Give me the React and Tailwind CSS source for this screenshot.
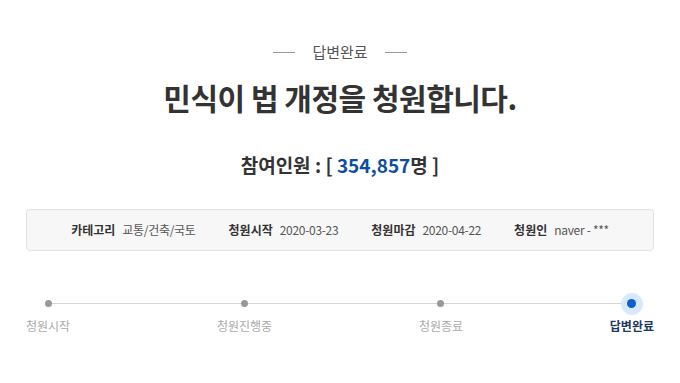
const steps = [
  { label: "청원시작", active: false },
  { label: "청원진행중", active: false },
  { label: "청원종료", active: false },
  { label: "답변완료", active: true },
];

const info = [
  ["카테고리", "교통/건축/국토"],
  ["청원시작", "2020-03-23"],
  ["청원마감", "2020-04-22"],
  ["청원인", "naver - ***"],
];

const App = () => {
  return (
    <div
      className="w-[680px] h-[383px] bg-white overflow-hidden"
      style={{ fontFamily: '"Noto Sans CJK KR", "Noto Sans", sans-serif' }}
    >
      {/* status tag */}
      <div className="flex items-center justify-center gap-[17px] pt-[41px] h-[63px]">
        <span className="w-[22px] h-px bg-[#999]" />
        <span className="text-[15px] leading-[22px] text-[#555]">답변완료</span>
        <span className="w-[22px] h-px bg-[#999]" />
      </div>

      <h1 className="mt-[16px] text-center text-[30px] leading-[36px] font-bold text-[#333] tracking-[-0.5px]">
        민식이 법 개정을 청원합니다.
      </h1>

      <div className="mt-[36px] text-center text-[19px] leading-[28px] font-bold text-[#333]">
        참여인원 : [ <span className="text-[#0d4ea0]">354,857</span>명 ]
      </div>

      {/* info box */}
      <div className="mt-[30px] mx-[26px] h-[42px] rounded-[4px] border border-[#e2e2e2] bg-[#f7f7f7] flex items-center justify-center gap-[33px] text-[12px]">
        {info.map(([k, v]) => (
          <div key={k} className="flex items-center gap-[7px]">
            <span className="font-bold text-[#333]">{k}</span>
            <span className="text-[#555] tracking-[-0.3px]">{v}</span>
          </div>
        ))}
      </div>

      {/* progress */}
      <div className="relative mt-[46px] mx-[26px] flex justify-between">
        <div className="absolute left-[20px] right-[20px] top-[6px] h-px bg-[#d6d6d6]" />
        {steps.map((s) => (
          <div key={s.label} className="relative flex flex-col items-center">
            <div className="h-[13px] flex items-center justify-center">
              {s.active ? (
                <span className="w-[22px] h-[22px] rounded-full bg-[#d8e9fd] flex items-center justify-center">
                  <span className="w-[9px] h-[9px] rounded-full bg-[#0b5fd0]" />
                </span>
              ) : (
                <span className="w-[7px] h-[7px] rounded-full bg-[#999]" />
              )}
            </div>
            <span
              className={
                s.active
                  ? "mt-[7px] text-[12px] leading-[18px] font-bold text-[#1c3763]"
                  : "mt-[7px] text-[12px] leading-[18px] text-[#aaa]"
              }
            >
              {s.label}
            </span>
          </div>
        ))}
      </div>
    </div>
  );
};

export default App;
